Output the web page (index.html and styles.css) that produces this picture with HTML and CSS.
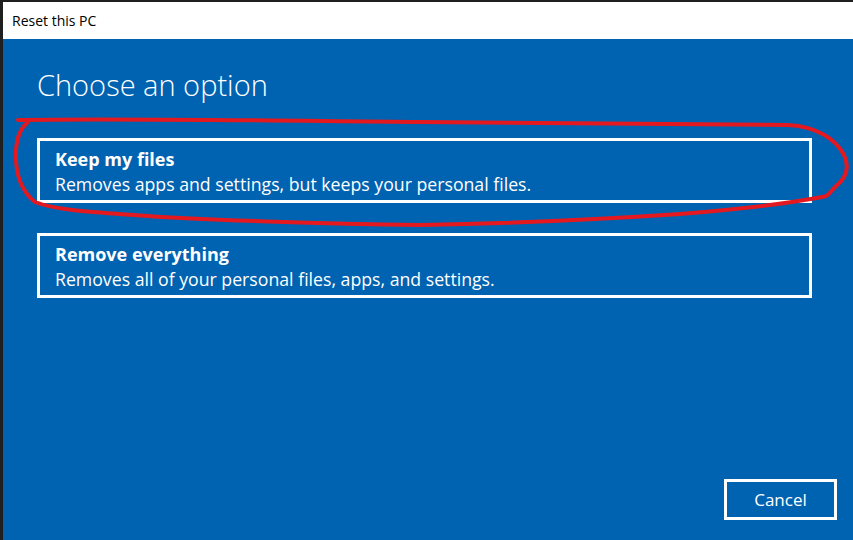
FILE: index.html
```html
<!DOCTYPE html>
<html lang="en">
<head>
<meta charset="utf-8">
<title>Reset this PC</title>
<link rel="stylesheet" href="styles.css">
</head>
<body>
<div class="window">
  <div class="titlebar">Reset this PC</div>
  <div class="content">
    <h1 class="heading">Choose an option</h1>
    <div class="options">
      <div class="option">
        <div class="option-title">Keep my files</div>
        <div class="option-desc">Removes apps and settings, but keeps your personal files.</div>
      </div>
      <div class="option">
        <div class="option-title">Remove everything</div>
        <div class="option-desc">Removes all of your personal files, apps, and settings.</div>
      </div>
    </div>
    <div class="footer">
      <button class="cancel">Cancel</button>
    </div>
  </div>
</div>
<svg class="annotation" width="853" height="540" viewBox="0 0 853 540">
  <path d="M18,120 C120,118 300,121 420,122 C600,124 720,125 787,125 C815,126 835,138 844,155 C850,168 846,178 836,186 C830,192 829,196 822,197 C790,203 730,210 680,214 C560,222 480,224 420,225 C330,224 200,220 133,215 C90,212 55,210 35,202 C20,190 15,170 16,150 C17,135 22,127 27,123" fill="none" stroke="#e3191f" stroke-width="4" stroke-linecap="round" stroke-linejoin="round"/>
</svg>
</body>
</html>
```
FILE: styles.css
```css
html, body {
  margin: 0;
  padding: 0;
  width: 853px;
  height: 540px;
  overflow: hidden;
  background: #1f1f1f;
}
body {
  padding: 2px 0 0 3px;
  box-sizing: border-box;
  font-family: "Open Sans", "Noto Sans", sans-serif;
}
.window {
  width: 860px;
  height: 538px;
  display: flex;
  flex-direction: column;
}
.titlebar {
  height: 37px;
  background: #ffffff;
  color: #000000;
  font-size: 14px;
  line-height: 37px;
  padding-left: 9px;
  box-sizing: border-box;
}
.content {
  flex: 1;
  background: #0063b1;
  color: #ffffff;
  padding: 26px 0 0 34px;
  display: flex;
  flex-direction: column;
}
.heading {
  margin: 0;
  font-size: 29px;
  font-weight: 300;
  line-height: 40px;
}
.options {
  margin-top: 33px;
  display: flex;
  flex-direction: column;
  gap: 30px;
  width: 775px;
}
.option {
  border: 3px solid #ffffff;
  height: 65px;
  box-sizing: border-box;
  padding: 6px 0 0 15px;
}
.option-title {
  font-size: 18px;
  font-weight: 700;
  line-height: 24px;
}
.option-desc {
  font-size: 17.7px;
  line-height: 26px;
}
.footer {
  margin-top: auto;
  padding: 0 0 20px 687px;
}
.cancel {
  width: 113px;
  height: 41px;
  background: transparent;
  border: 3px solid #ffffff;
  color: #ffffff;
  font-family: "Open Sans", "Noto Sans", sans-serif;
  font-size: 17px;
  padding: 0;
  box-sizing: border-box;
}
.annotation {
  position: absolute;
  left: 0;
  top: 0;
  pointer-events: none;
}
```
